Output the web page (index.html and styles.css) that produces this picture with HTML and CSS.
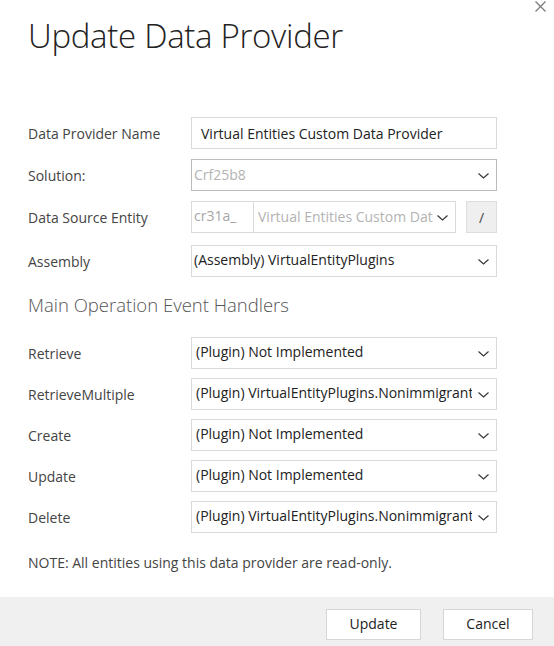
FILE: index.html
```html
<!DOCTYPE html>
<html>
<head>
<meta charset="utf-8">
<link rel="stylesheet" href="styles.css">
</head>
<body>
<div class="dialog">
  <button class="close" aria-label="Close">
    <svg width="11" height="11" viewBox="0 0 11 11"><path d="M0.5 0.5 L10.5 10.5 M10.5 0.5 L0.5 10.5" stroke="#7a7a7a" stroke-width="1.3" fill="none"/></svg>
  </button>
  <div class="header">
    <h1 class="title">Update Data Provider</h1>
  </div>
  <div class="content">
    <div class="form top">
      <div class="row">
        <label class="label">Data Provider Name</label>
        <div class="input">Virtual Entities Custom Data Provider</div>
      </div>
      <div class="row">
        <label class="label">Solution:</label>
        <div class="select disabled dark"><span class="value">Crf25b8</span><svg class="chev" width="11" height="6" viewBox="0 0 11 6"><path d="M0.5 0.5 L5.5 5 L10.5 0.5" stroke="#333" stroke-width="1.1" fill="none"/></svg></div>
      </div>
      <div class="row">
        <label class="label">Data Source Entity</label>
        <div class="entity">
          <div class="prefix">cr31a_</div>
          <div class="select disabled entity-select"><span class="value">Virtual Entities Custom Data Provider</span><svg class="chev" width="11" height="6" viewBox="0 0 11 6"><path d="M0.5 0.5 L5.5 5 L10.5 0.5" stroke="#333" stroke-width="1.1" fill="none"/></svg></div>
          <button class="edit">/</button>
        </div>
      </div>
      <div class="row assembly">
        <label class="label">Assembly</label>
        <div class="select"><span class="value">(Assembly) VirtualEntityPlugins</span><svg class="chev" width="11" height="6" viewBox="0 0 11 6"><path d="M0.5 0.5 L5.5 5 L10.5 0.5" stroke="#333" stroke-width="1.1" fill="none"/></svg></div>
      </div>
    </div>
    <h2 class="section">Main Operation Event Handlers</h2>
    <div class="form events">
      <div class="row">
        <label class="label">Retrieve</label>
        <div class="select ev"><span class="value">(Plugin) Not Implemented</span><svg class="chev" width="11" height="6" viewBox="0 0 11 6"><path d="M0.5 0.5 L5.5 5 L10.5 0.5" stroke="#333" stroke-width="1.1" fill="none"/></svg></div>
      </div>
      <div class="row">
        <label class="label">RetrieveMultiple</label>
        <div class="select ev"><span class="value">(Plugin) VirtualEntityPlugins.NonimmigrantVisaPlugin</span><svg class="chev" width="11" height="6" viewBox="0 0 11 6"><path d="M0.5 0.5 L5.5 5 L10.5 0.5" stroke="#333" stroke-width="1.1" fill="none"/></svg></div>
      </div>
      <div class="row">
        <label class="label">Create</label>
        <div class="select ev"><span class="value">(Plugin) Not Implemented</span><svg class="chev" width="11" height="6" viewBox="0 0 11 6"><path d="M0.5 0.5 L5.5 5 L10.5 0.5" stroke="#333" stroke-width="1.1" fill="none"/></svg></div>
      </div>
      <div class="row">
        <label class="label">Update</label>
        <div class="select ev"><span class="value">(Plugin) Not Implemented</span><svg class="chev" width="11" height="6" viewBox="0 0 11 6"><path d="M0.5 0.5 L5.5 5 L10.5 0.5" stroke="#333" stroke-width="1.1" fill="none"/></svg></div>
      </div>
      <div class="row">
        <label class="label">Delete</label>
        <div class="select ev"><span class="value">(Plugin) VirtualEntityPlugins.NonimmigrantVisaPlugin</span><svg class="chev" width="11" height="6" viewBox="0 0 11 6"><path d="M0.5 0.5 L5.5 5 L10.5 0.5" stroke="#333" stroke-width="1.1" fill="none"/></svg></div>
      </div>
    </div>
    <p class="note">NOTE: All entities using this data provider are read-only.</p>
  </div>
  <div class="footer">
    <button class="btn">Update</button>
    <button class="btn">Cancel</button>
  </div>
</div>
</body>
</html>
```

FILE: styles.css
```css
* { box-sizing: border-box; }
html, body {
  margin: 0;
  padding: 0;
  background: #fff;
}
body {
  font-family: "Open Sans", "Noto Sans", "Liberation Sans", sans-serif;
  font-size: 14px;
  color: #333;
}
.dialog {
  position: relative;
  width: 554px;
  height: 646px;
  display: flex;
  flex-direction: column;
  background: #fff;
}
.close {
  position: absolute;
  top: 0;
  right: 7px;
  width: 13px;
  height: 12px;
  padding: 0;
  border: 0;
  background: transparent;
  display: flex;
  align-items: center;
  justify-content: center;
}
.header {
  padding: 14px 0 0 28px;
  height: 117px;
}
.title {
  margin: 0;
  font-family: "Open Sans", "Lato", sans-serif;
  font-weight: 300;
  font-size: 33px;
  line-height: 44px;
  color: #222;
  letter-spacing: -0.3px;
}
.content {
  flex: 1;
  padding: 0 57px 0 28px;
}
.form {
  display: flex;
  flex-direction: column;
}
.form.top { gap: 10px; }
.form.top .assembly { margin-top: 2px; }
.form.events { gap: 9px; }
.row {
  display: grid;
  grid-template-columns: 163px 306px;
  align-items: center;
  height: 32px;
}
.label {
  color: #444;
  font-size: 14px;
  padding-top: 1px;
}
.input {
  height: 32px;
  border: 1px solid #dadada;
  padding: 0 0 0 9px;
  display: flex;
  align-items: center;
  color: #222;
  font-size: 14px;
  white-space: nowrap;
  overflow: hidden;
}
.select {
  height: 32px;
  border: 1px solid #dadada;
  display: flex;
  align-items: center;
  padding: 0 7px 0 2px;
  color: #222;
  font-size: 14px;
  background: #fff;
}
.select.dark { border-color: #bcbcbc; }
.select.ev { padding-left: 4px; }
.select .value {
  flex: 1;
  white-space: nowrap;
  overflow: hidden;
  padding-bottom: 3px;
  min-width: 0;
}
.select.disabled .value { color: #b3b3b3; padding-bottom: 2px; }
.chev { flex: none; margin-left: 6px; margin-top: 1px; }
.entity {
  display: flex;
  align-items: stretch;
  height: 32px;
}
.prefix {
  width: 62px;
  border: 1px solid #dadada;
  border-right: 0;
  color: #a6a6a6;
  font-size: 14px;
  padding: 0 0 3px 2px;
  display: flex;
  align-items: center;
}
.entity-select {
  width: 203px;
  padding-left: 4px;
}
.entity-select .chev { margin-left: 4px; }
.edit {
  width: 31px;
  margin-left: 10px;
  border: 1px solid #dedede;
  background: #efefef;
  color: #444;
  font-family: inherit;
  font-size: 14px;
  padding: 0;
}
.section {
  margin: 0;
  padding: 15px 0 0 0;
  height: 60px;
  font-weight: 300;
  font-size: 18.5px;
  line-height: 26px;
  color: #555;
}
.note {
  margin: 20px 0 0 0;
  color: #444;
  font-size: 14px;
}
.footer {
  height: 49px;
  background: #f0f0f0;
  display: flex;
  justify-content: flex-end;
  align-items: flex-start;
  padding: 12px 21px 0 0;
  gap: 22px;
}
.btn {
  width: 95px;
  height: 31px;
  background: #fff;
  border: 1px solid #d6d6d6;
  font-family: inherit;
  font-size: 14px;
  color: #222;
  padding: 0 0 2px 0;
}
.btn + .btn { width: 90px; }
```
